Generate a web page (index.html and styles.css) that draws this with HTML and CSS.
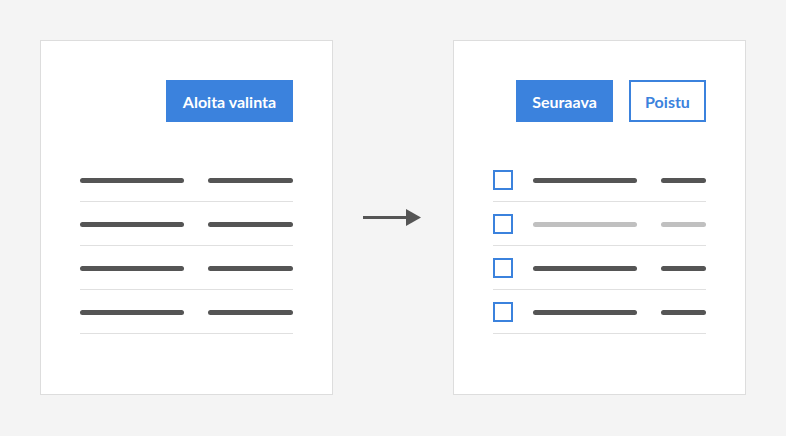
FILE: index.html
```html
<!DOCTYPE html>
<html lang="fi">
<head>
<meta charset="utf-8">
<title>Valinta</title>
<link rel="stylesheet" href="styles.css">
</head>
<body>
<main class="stage">
  <section class="card">
    <div class="actions">
      <button class="btn btn-primary btn-start">Aloita valinta</button>
    </div>
    <ul class="rows">
      <li class="row"><span class="bar bar-long"></span><span class="bar bar-mid"></span></li>
      <li class="row"><span class="bar bar-long"></span><span class="bar bar-mid"></span></li>
      <li class="row"><span class="bar bar-long"></span><span class="bar bar-mid"></span></li>
      <li class="row"><span class="bar bar-long"></span><span class="bar bar-mid"></span></li>
    </ul>
  </section>

  <div class="arrow">
    <svg width="58" height="18" viewBox="0 0 58 18">
      <path d="M0 8.5 H44" stroke="#555" stroke-width="3"/>
      <path d="M43 0 L58 8.5 L43 17 Z" fill="#555"/>
    </svg>
  </div>

  <section class="card">
    <div class="actions">
      <button class="btn btn-primary btn-next">Seuraava</button>
      <button class="btn btn-outline btn-exit">Poistu</button>
    </div>
    <ul class="rows">
      <li class="row"><span class="check"></span><span class="bar bar-long"></span><span class="bar bar-short"></span></li>
      <li class="row row-muted"><span class="check"></span><span class="bar bar-long"></span><span class="bar bar-short"></span></li>
      <li class="row"><span class="check"></span><span class="bar bar-long"></span><span class="bar bar-short"></span></li>
      <li class="row"><span class="check"></span><span class="bar bar-long"></span><span class="bar bar-short"></span></li>
    </ul>
  </section>
</main>
</body>
</html>
```

FILE: styles.css
```css
* {
  box-sizing: border-box;
}

html, body {
  margin: 0;
  padding: 0;
  background: #f4f4f4;
  font-family: Lato, "Open Sans", sans-serif;
}

.stage {
  display: flex;
  align-items: center;
  padding: 40px;
}

.card {
  width: 293px;
  height: 355px;
  background: #fff;
  border: 1px solid #dddddd;
  padding: 39px;
  display: flex;
  flex-direction: column;
}

.actions {
  display: flex;
  justify-content: flex-end;
  gap: 16px;
  height: 42px;
}

.btn {
  height: 42px;
  margin: 0;
  padding: 0;
  border: none;
  font-family: Lato, "Open Sans", sans-serif;
  font-weight: 700;
  font-size: 16px;
  display: flex;
  align-items: center;
  justify-content: center;
}

.btn-primary {
  background: #3b82dd;
  color: #fff;
}

.btn-outline {
  background: #fff;
  color: #3b82dd;
  border: 2px solid #3b82dd;
}

.btn-start { width: 127px; }
.btn-next { width: 97px; }
.btn-exit { width: 77px; }

.rows {
  list-style: none;
  margin: 36px 0 0;
  padding: 0;
}

.row {
  height: 44px;
  border-bottom: 1px solid #e0e0e0;
  display: flex;
  align-items: center;
  padding-top: 1px;
}

.bar {
  height: 5px;
  border-radius: 3px;
  background: #555555;
}

.bar-long {
  width: 104px;
}

.bar-mid {
  width: 85px;
  margin-left: auto;
}

.bar-short {
  width: 45px;
  margin-left: auto;
}

.check {
  width: 20px;
  height: 20px;
  border: 2px solid #3b82dd;
  margin-right: 20px;
}

.row-muted .bar {
  background: #c0c0c0;
}

.arrow {
  width: 120px;
  display: flex;
  justify-content: center;
  padding-right: 2px;
}

.arrow svg {
  display: block;
}
```
